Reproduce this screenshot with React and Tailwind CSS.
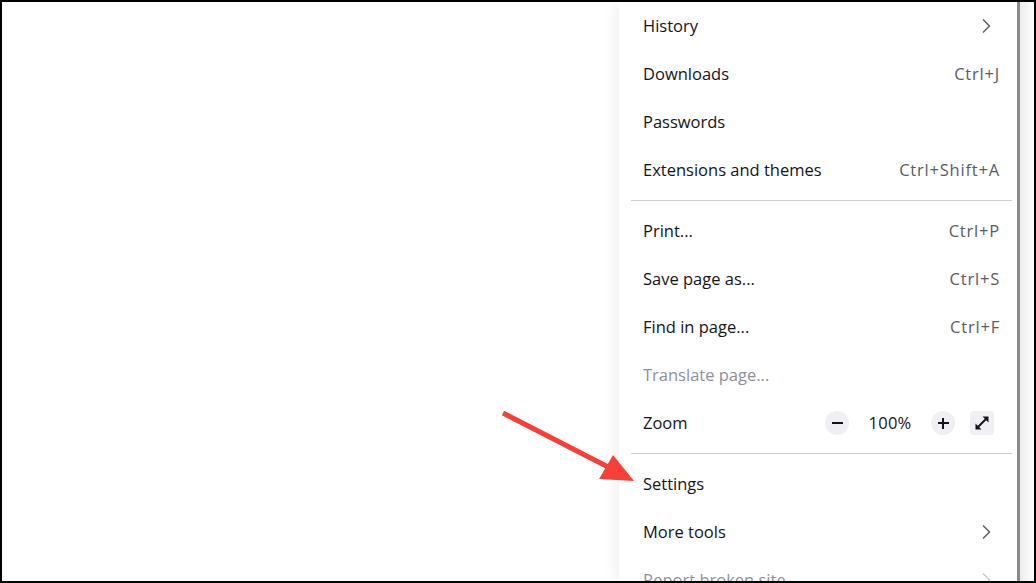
import React from 'react';

const font = { fontFamily: '"Open Sans", "Noto Sans", sans-serif' };

function Chevron({ muted }) {
  return (
    <svg width="16" height="16" viewBox="0 0 16 16" className="mr-[6px]">
      <path
        d="M5 1.5 L11.5 8 L5 14.5"
        fill="none"
        stroke={muted ? '#c8c8cc' : '#5b5b66'}
        strokeWidth="1.4"
      />
    </svg>
  );
}

function Item({ label, shortcut, chevron, disabled }) {
  return (
    <div className="h-[48px] shrink-0 flex items-center justify-between pl-[12px] pr-[12px]">
      <span className={disabled ? 'text-[#8f8f9d]' : 'text-[#15141a]'}>{label}</span>
      {shortcut && <span className="text-[#5b5b66] tracking-[0.8px]">{shortcut}</span>}
      {chevron && <Chevron muted={disabled} />}
    </div>
  );
}

function Separator() {
  return <div className="h-px bg-[#cfcfd8] my-[6px] shrink-0" />;
}

function ZoomRow() {
  return (
    <div className="h-[48px] shrink-0 flex items-center justify-between pl-[12px] pr-[18px]">
      <span className="text-[#15141a]">Zoom</span>
      <div className="flex items-center">
        <div className="w-[24px] h-[24px] rounded-full bg-[#f0f0f4] flex items-center justify-center">
          <div className="w-[11px] h-[2px] bg-[#15141a]" />
        </div>
        <span className="text-[#15141a] w-[44px] mx-[19px] text-center tracking-[0.3px]">100%</span>
        <div className="w-[24px] h-[24px] rounded-full bg-[#f0f0f4] flex items-center justify-center relative">
          <div className="w-[11px] h-[2px] bg-[#15141a]" />
          <div className="absolute w-[2px] h-[11px] bg-[#15141a]" />
        </div>
        <div className="ml-[15px] w-[24px] h-[24px] rounded-[4px] bg-[#f0f0f4] flex items-center justify-center">
          <svg width="16" height="16" viewBox="0 0 16 16">
            <path d="M3.5 12.5 L12.5 3.5" stroke="#15141a" strokeWidth="2" />
            <path d="M1.5 8.5 L1.5 14.5 L7.5 14.5 Z" fill="#15141a" />
            <path d="M8.5 1.5 L14.5 1.5 L14.5 7.5 Z" fill="#15141a" />
          </svg>
        </div>
      </div>
    </div>
  );
}

export default function App() {
  return (
    <div
      className="w-[1036px] h-[583px] border-2 border-black bg-white flex overflow-hidden relative text-[16.5px]"
      style={font}
    >
      <div className="w-[617px] shrink-0" />
      <div className="w-[398px] shrink-0 bg-white flex flex-col pl-[12px] pr-[5px] shadow-[-4px_0_12px_rgba(0,0,0,0.06)] relative z-10">
        <Item label="History" chevron />
        <Item label="Downloads" shortcut="Ctrl+J" />
        <Item label="Passwords" />
        <Item label="Extensions and themes" shortcut="Ctrl+Shift+A" />
        <Separator />
        <Item label="Print..." shortcut="Ctrl+P" />
        <Item label="Save page as..." shortcut="Ctrl+S" />
        <Item label="Find in page..." shortcut="Ctrl+F" />
        <Item label="Translate page..." disabled />
        <ZoomRow />
        <Separator />
        <Item label="Settings" />
        <Item label="More tools" chevron />
        <Item label="Report broken site" chevron disabled />
      </div>
      <div className="w-[3px] shrink-0 bg-[#8a8a8a] relative z-10" />
      <div className="flex-1 bg-gradient-to-r from-[#ececec] to-white" />

      <svg className="absolute left-0 top-0 z-20" width="1036" height="583" viewBox="0 0 1036 583">
        <line x1="501" y1="411" x2="610" y2="467" stroke="#f5413a" strokeWidth="5" />
        <polygon points="597,477 611,453 632,479" fill="#f5413a" />
      </svg>
    </div>
  );
}
